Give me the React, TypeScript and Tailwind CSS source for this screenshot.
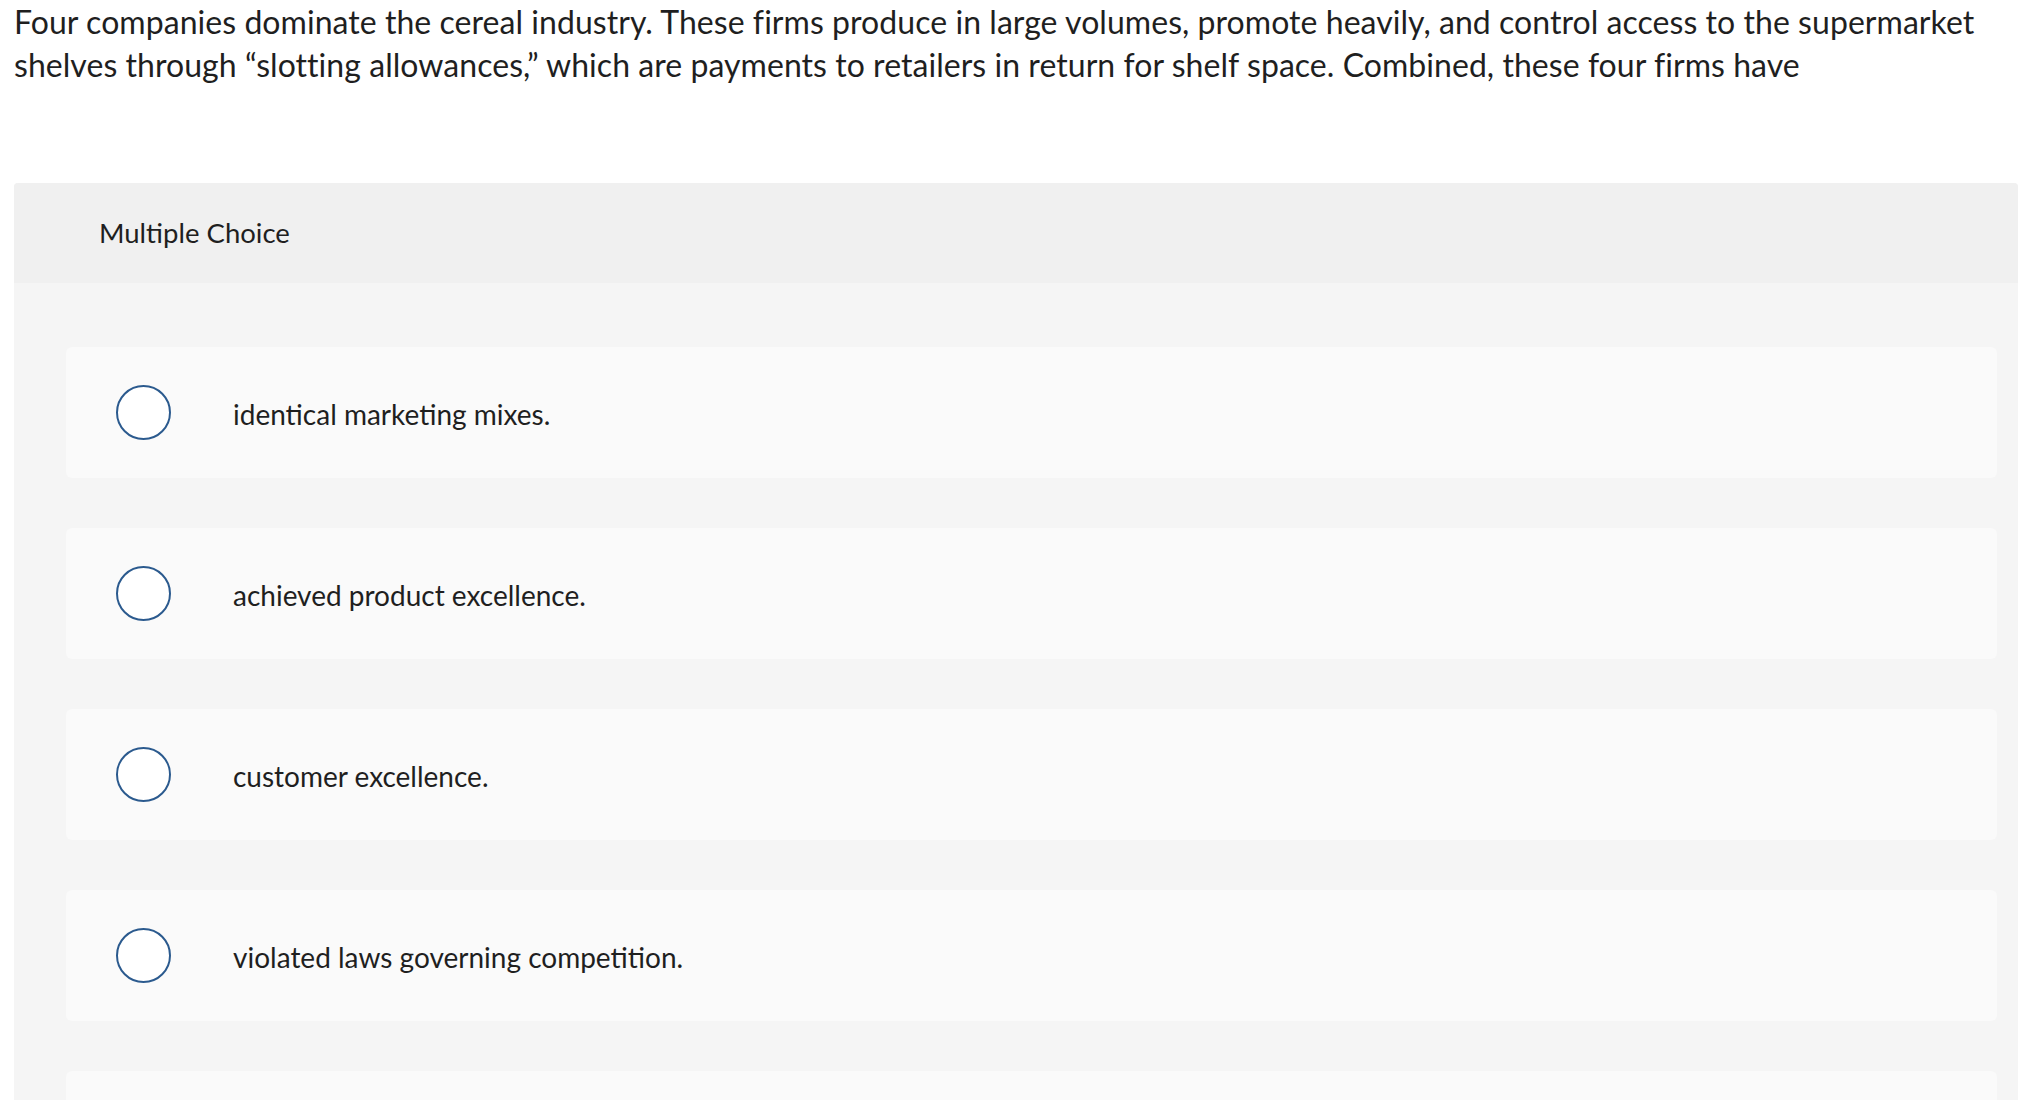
import React from "react";

const options = [
  "identical marketing mixes.",
  "achieved product excellence.",
  "customer excellence.",
  "violated laws governing competition.",
  "",
];

export default function App() {
  return (
    <div
      className="w-[2018px] h-[1100px] overflow-hidden bg-white text-[#1f1f1f]"
      style={{ fontFamily: "Lato, 'Open Sans', sans-serif" }}
    >
      <p className="px-[14px] text-[32px] leading-[43px] tracking-[0.05px]">
        Four companies dominate the cereal industry. These firms produce in large volumes, promote heavily, and control access to the supermarket shelves through “slotting allowances,” which are payments to retailers in return for shelf space. Combined, these four firms have
      </p>
      <div className="ml-[14px] mt-[97px] rounded-t-[4px] bg-[#f5f5f5]">
        <div className="h-[100px] flex items-center pl-[85px] bg-[#f0f0f0] rounded-t-[4px] text-[27.5px]">
          Multiple Choice
        </div>
        <div className="pl-[52px] pr-[21px] pt-[64px] flex flex-col gap-[50px]">
          {options.map((o, i) => (
            <div
              key={i}
              className="h-[131px] bg-[#fafafa] rounded-[6px] flex items-center pl-[50px]"
            >
              <div className="w-[55px] h-[55px] rounded-full border-[2.5px] border-[#2b5a8e] bg-white shrink-0" />
              <span className="ml-[62px] pt-[3px] text-[28px]">{o}</span>
            </div>
          ))}
        </div>
      </div>
    </div>
  );
}
